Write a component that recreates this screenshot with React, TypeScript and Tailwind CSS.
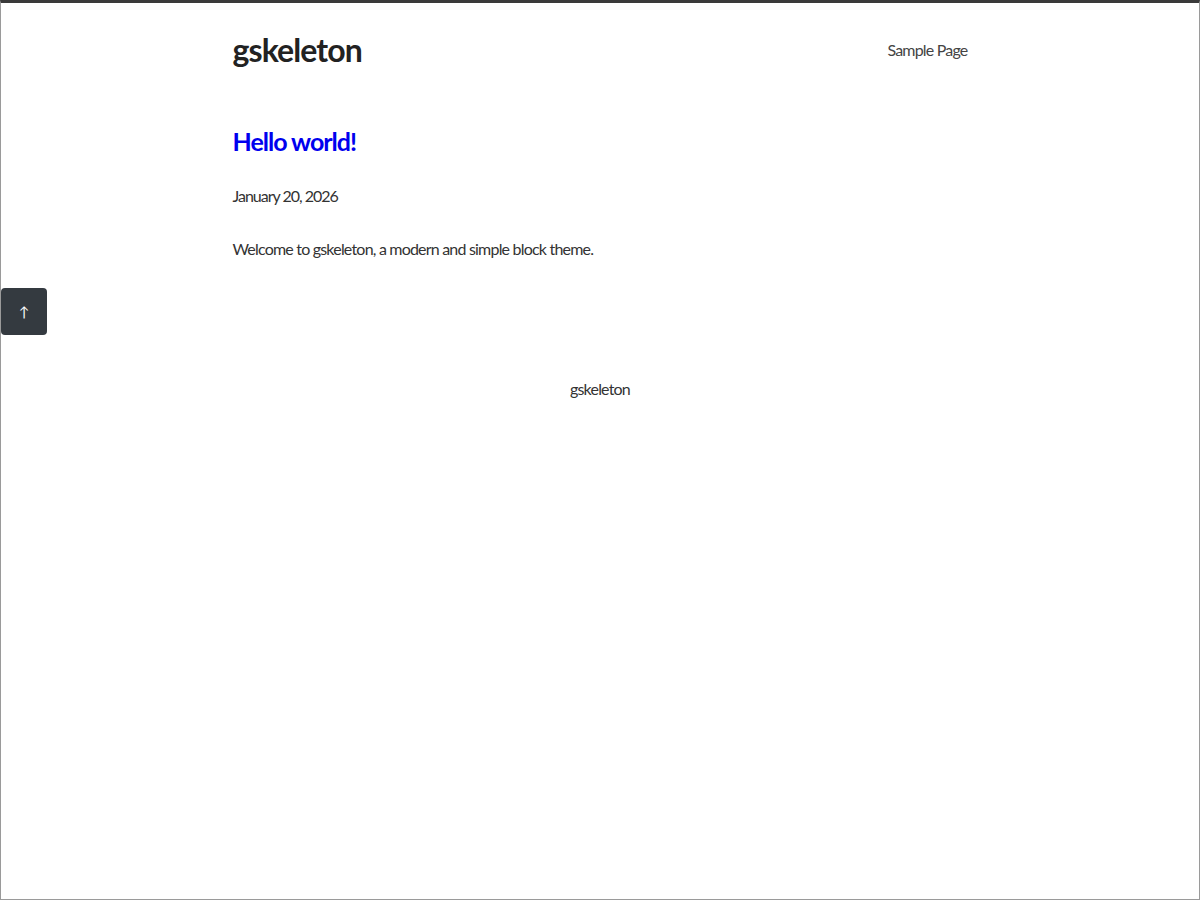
export default function App() {
  const font = { fontFamily: "Lato, 'Noto Sans', sans-serif" };
  return (
    <div className="relative h-[900px] w-[1200px] overflow-hidden bg-white border-x border-b border-[#9a9a9a] border-t-[3px] border-t-[#3a3a3a] text-[#333]" style={font}>
      <div className="mx-auto w-[735px]">
        <header className="flex items-center justify-between pt-[27px]">
          <div className="text-[32px] font-bold leading-[40px] tracking-[-0.9px] text-[#222]">gskeleton</div>
          <nav className="text-[16px] tracking-[-0.8px] text-[#444]">Sample Page</nav>
        </header>
        <main className="pt-[55px]">
          <h1 className="text-[25px] font-bold leading-[32px] tracking-[-1px] text-[#0000ee]">Hello world!</h1>
          <p className="mt-[27px] text-[16px] leading-[24px] tracking-[-1px]">January 20, 2026</p>
          <p className="mt-[29px] text-[16px] leading-[24px] tracking-[-0.8px]">Welcome to gskeleton, a modern and simple block theme.</p>
        </main>
        <footer className="mt-[116px] text-center text-[16px] leading-[24px] tracking-[-0.8px]">gskeleton</footer>
      </div>
      <button className="absolute left-0 top-[285px] flex h-[47px] w-[46px] items-center justify-center rounded-[4px] bg-[#343a40] text-[14px] text-white">↑</button>
    </div>
  );
}
